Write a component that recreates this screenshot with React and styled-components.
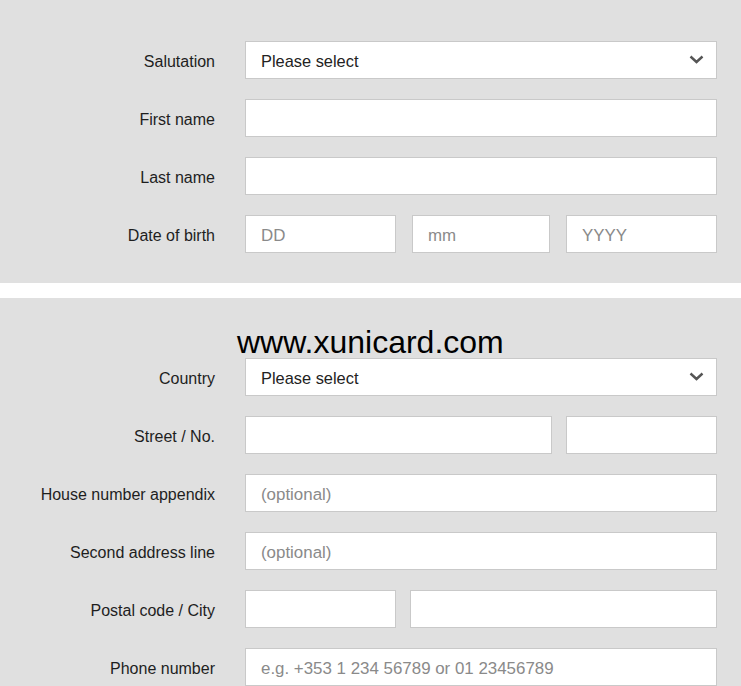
import styled, { createGlobalStyle } from 'styled-components';

const GlobalStyle = createGlobalStyle`
    html, body {
        margin: 0;
        padding: 0;
        background: #ffffff;
    }
    body {
        font-family: "Liberation Sans", Arial, sans-serif;
        color: #222222;
    }
`;

const Page = styled.div`
    width: 741px;
    display: flex;
    flex-direction: column;
    gap: 15px;
`;

const Panel = styled.section`
    position: relative;
    background: #e0e0e0;
    padding: ${p => p.$top || 41}px 24px 30px 0;
    display: flex;
    flex-direction: column;
    gap: 20px;
`;

const Watermark = styled.div`
    position: absolute;
    top: 26px;
    left: 237px;
    font-family: "Liberation Sans", Arial, sans-serif;
    font-size: 32px;
    color: #000000;
    pointer-events: none;
`;

const Row = styled.div`
    display: grid;
    grid-template-columns: 215px 472px;
    column-gap: 30px;
    align-items: center;
`;

const Label = styled.label`
    padding-top: 4px;
    text-align: right;
    font-size: 16px;
    color: #1e1e1e;
    white-space: nowrap;
`;

const Fields = styled.div`
    display: grid;
    grid-template-columns: ${p => p.$cols};
    column-gap: ${p => p.$gap || 14}px;
`;

const Input = styled.input`
    box-sizing: border-box;
    width: 100%;
    height: 38px;
    margin: 0;
    padding: 3px 15px 0;
    border: 1px solid #c9c9c9;
    border-radius: 0;
    background: #ffffff;
    font-family: "Liberation Sans", Arial, sans-serif;
    font-size: 16.4px;
    color: #222222;
    outline: none;

    &::placeholder {
        color: #8a8a8a;
        font-size: 16.9px;
        opacity: 1;
    }
`;

const SelectWrap = styled.div`
    position: relative;
`;

const Select = styled.select`
    box-sizing: border-box;
    width: 100%;
    height: 38px;
    margin: 0;
    padding: 1px 40px 0 15px;
    border: 1px solid #c9c9c9;
    border-radius: 0;
    background: #ffffff;
    appearance: none;
    font-family: "Liberation Sans", Arial, sans-serif;
    font-size: 16.4px;
    color: #222222;
    outline: none;
`;

const Chevron = styled.svg`
    position: absolute;
    right: 13px;
    top: 14px;
    width: 15px;
    height: 9px;
    pointer-events: none;
`;

const Dropdown = ({ id }) => (
    <SelectWrap>
        <Select id={id} defaultValue="">
            <option value="">Please select</option>
        </Select>
        <Chevron viewBox="0 0 15 9">
            <polyline points="1.5,1.5 7.5,7 13.5,1.5" fill="none" stroke="#555555" strokeWidth="2.4" />
        </Chevron>
    </SelectWrap>
);

const Field = ({ label, children }) => (
    <Row>
        <Label>{label}</Label>
        {children}
    </Row>
);

const App = () => (
    <>
        <GlobalStyle />
        <Page>
            <Panel>
                <Field label="Salutation">
                    <Dropdown id="salutation" />
                </Field>
                <Field label="First name">
                    <Input type="text" />
                </Field>
                <Field label="Last name">
                    <Input type="text" />
                </Field>
                <Field label="Date of birth">
                    <Fields $cols="151px 1fr 151px" $gap={16}>
                        <Input type="text" placeholder="DD" />
                        <Input type="text" placeholder="mm" />
                        <Input type="text" placeholder="YYYY" />
                    </Fields>
                </Field>
            </Panel>
            <Panel $top={60}>
                <Watermark>www.xunicard.com</Watermark>
                <Field label="Country">
                    <Dropdown id="country" />
                </Field>
                <Field label="Street / No.">
                    <Fields $cols="1fr 151px">
                        <Input type="text" />
                        <Input type="text" />
                    </Fields>
                </Field>
                <Field label="House number appendix">
                    <Input type="text" placeholder="(optional)" />
                </Field>
                <Field label="Second address line">
                    <Input type="text" placeholder="(optional)" />
                </Field>
                <Field label="Postal code / City">
                    <Fields $cols="151px 1fr">
                        <Input type="text" />
                        <Input type="text" />
                    </Fields>
                </Field>
                <Field label="Phone number">
                    <Input type="tel" placeholder="e.g. +353 1 234 56789 or 01 23456789" />
                </Field>
            </Panel>
        </Page>
    </>
);

export default App;
